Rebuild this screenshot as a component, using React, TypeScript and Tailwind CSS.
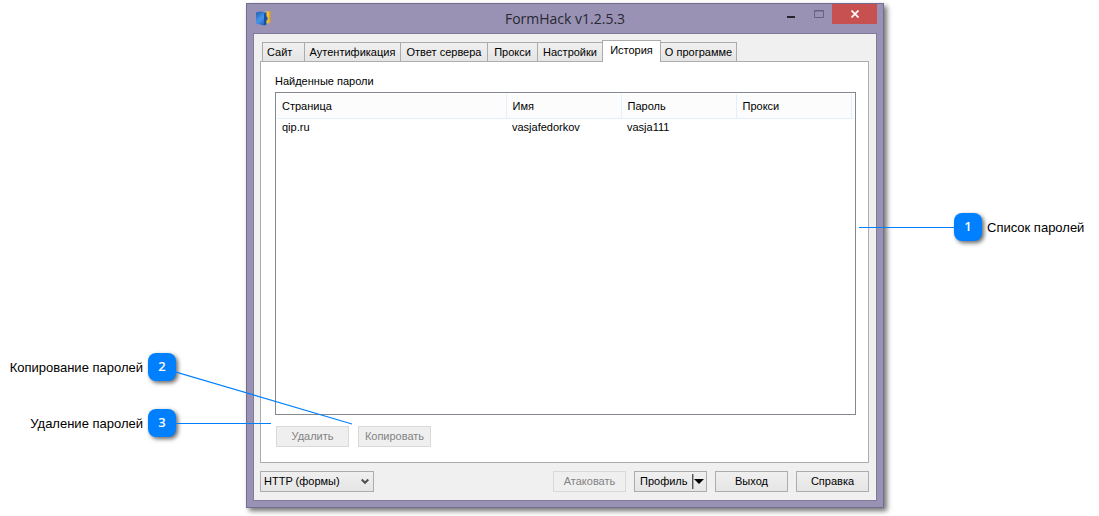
import { useState } from "react";

const tabs = [
  { name: "Сайт", width: "w-[43px] pl-1" },
  { name: "Аутентификация", width: "w-[97px]" },
  { name: "Ответ сервера", width: "w-[88px]" },
  { name: "Прокси", width: "w-[51px]" },
  { name: "Настройки", width: "w-[66px]" },
  { name: "История", width: "w-[59px]" },
  { name: "О программе", width: "w-[77px]" },
];

const rows = [{ page: "qip.ru", name: "vasjafedorkov", password: "vasja111", proxy: "" }];

function Badge({ value }: { value: number }) {
  return (
    <span className="flex size-7 shrink-0 items-center justify-center rounded-lg bg-[#0080ff] font-['Open_Sans',sans-serif] text-[13px] font-semibold text-white shadow-[2px_2px_4px_rgba(0,0,0,0.6)]">
      {value}
    </span>
  );
}

function AppIcon() {
  return (
    <svg width="16" height="16" viewBox="0 0 16 16" aria-hidden="true">
      <defs>
        <linearGradient id="book" x1="0" y1="0" x2="0.6" y2="1">
          <stop offset="0" stopColor="#1b5cb0" />
          <stop offset="0.6" stopColor="#4a94ea" />
          <stop offset="1" stopColor="#2468c4" />
        </linearGradient>
        <linearGradient id="cover" x1="0" y1="0" x2="1" y2="0">
          <stop offset="0" stopColor="#fff2b0" />
          <stop offset="0.5" stopColor="#fbd04a" />
          <stop offset="1" stopColor="#e09c14" />
        </linearGradient>
      </defs>
      <path d="M8 2 15.500 1v11.500L10 14z" fill="url(#cover)" />
      <path d="M1 2.500 5 1.500l6 .5-2 2v11.500L1 13.500z" fill="url(#book)" />
      <path d="M9 3.500 11.500 2v4.500l1 .5v3l-1 .5v4L9 15.500z" fill="#174f9f" />
    </svg>
  );
}

function PushButton({ label, disabled = false }: { label: string; disabled?: boolean }) {
  return (
    <button
      type="button"
      disabled={disabled}
      className="h-[21px] w-[73px] border border-[#acacac] bg-linear-to-b from-[#f0f0f0] to-[#e5e5e5] text-center leading-none disabled:border-[#d9d9d9] disabled:from-[#efefef] disabled:to-[#efefef] disabled:text-[#838383]"
    >
      {label}
    </button>
  );
}

export default function App() {
  const [active, setActive] = useState("История");

  return (
    <main className="relative flex bg-white pt-[3px] pb-2 font-['Liberation_Sans',Arial,sans-serif] text-[11px] text-black">
      <aside className="relative z-10 flex w-[246px] shrink-0 flex-col items-end gap-7 pt-[350px] pr-[70px] text-[13px]">
        <div className="relative flex items-center gap-[5px]">
          <span className="pt-px">Копирование паролей</span>
          <Badge value={2} />
          <svg
            className="pointer-events-none absolute top-[18px] left-full"
            width="177"
            height="55"
            aria-hidden="true"
          >
            <path d="M0 1 176 53" stroke="#0080ff" strokeWidth="1.2" fill="none" />
          </svg>
        </div>
        <div className="relative flex items-center gap-[5px]">
          <span className="pt-px">Удаление паролей</span>
          <Badge value={3} />
          <span className="absolute top-[14px] left-full h-px w-[95px] bg-[#0080ff]" />
        </div>
      </aside>

      <section className="min-w-0 flex-1 border border-[#736d90] bg-[#9992b4] px-[6px] pb-[6px] shadow-[3px_3px_5px_rgba(0,0,0,0.55)]">
        <header className="relative flex h-[29px] items-center justify-center">
          <span className="absolute top-[6px] left-[2px]">
            <AppIcon />
          </span>
          <h1 className="font-['Open_Sans',sans-serif] text-sm text-[#282832]">FormHack v1.2.5.3</h1>
          <div className="absolute top-0 right-0 flex h-5">
            <button type="button" aria-label="Свернуть" className="flex w-7 items-center justify-center">
              <svg width="8" height="12" aria-hidden="true">
                <path d="M0 8h8v2H0z" fill="#252429" />
              </svg>
            </button>
            <button type="button" aria-label="Развернуть" disabled className="flex w-[27px] items-center justify-center">
              <svg width="10" height="8" aria-hidden="true">
                <path d="M.5 .5h9v7h-9zM0 1h10" fill="none" stroke="#68637d" />
              </svg>
            </button>
            <button
              type="button"
              aria-label="Закрыть"
              className="flex w-[45px] items-center justify-center bg-[#c75050]"
            >
              <svg width="8" height="8" viewBox="0 0 8 8" aria-hidden="true">
                <path d="M.5 .5l7 7M7.5 .5l-7 7" stroke="#fff" strokeWidth="1.7" />
              </svg>
            </button>
          </div>
        </header>

        <div className="border border-[#807998] bg-[#f0f0f0] pt-[6px] pr-[7px] pb-2 pl-[6px]">
          <div role="tablist" className="relative flex h-[21px] items-end pl-[2px]">
            {tabs.map((tab) => (
              <button
                key={tab.name}
                type="button"
                role="tab"
                aria-selected={active === tab.name}
                onClick={() => setActive(tab.name)}
                className={`-mr-px shrink-0 border border-[#acacac] leading-none whitespace-nowrap ${tab.width} ${
                  tab.name === "Сайт" ? "text-left" : "text-center"
                } ${
                  active === tab.name
                    ? "z-10 -mb-px h-[22px] border-b-0 bg-white pb-[2px]"
                    : "h-[19px] border-b-0 bg-linear-to-b from-[#f0f0f0] to-[#e5e5e5]"
                }`}
              >
                {tab.name}
              </button>
            ))}
          </div>

          <div role="tabpanel" className="border border-[#acacac] bg-white px-[14px] pt-[11px] pb-[15px]">
            <h2 className="mb-[3px] text-[11px] leading-4">Найденные пароли</h2>
            <div className="mr-[-2px] min-h-[323px] border border-[#828790] bg-white p-px">
              <table className="w-full table-fixed border-collapse text-left">
                <colgroup>
                  <col />
                  <col className="w-[115px]" />
                  <col className="w-[115px]" />
                  <col className="w-[115px]" />
                  <col className="w-[3px]" />
                </colgroup>
                <thead>
                  <tr className="h-6 border-b border-[#e3effb] bg-[#fcfcfc]">
                    <th className="border-r border-[#e3effb] pl-[5px] font-normal">Страница</th>
                    <th className="border-r border-[#e3effb] pl-[6px] font-normal">Имя</th>
                    <th className="border-r border-[#e3effb] pl-[6px] font-normal">Пароль</th>
                    <th className="border-r border-[#e3effb] pl-[6px] font-normal">Прокси</th>
                    <td />
                  </tr>
                </thead>
                <tbody>
                  {rows.map((row) => (
                    <tr key={row.name} className="h-[18px]">
                      <td className="pl-[5px]">{row.page}</td>
                      <td className="pl-[6px]">{row.name}</td>
                      <td className="pl-[6px]">{row.password}</td>
                      <td className="pl-[6px]">{row.proxy}</td>
                      <td />
                    </tr>
                  ))}
                </tbody>
              </table>
            </div>
            <div className="mt-[11px] flex gap-[9px] pl-px">
              <PushButton label="Удалить" disabled />
              <PushButton label="Копировать" disabled />
            </div>
          </div>

          <footer className="mt-2 flex items-center gap-2">
            <div className="relative mr-auto">
              <select
                aria-label="Протокол"
                className="block h-[21px] w-[114px] appearance-none border border-[#acacac] bg-linear-to-b from-[#f0f0f0] to-[#e5e5e5] pl-[3px] leading-none"
              >
                <option>HTTP (формы)</option>
              </select>
              <svg
                className="pointer-events-none absolute top-[7px] right-[5px]"
                width="8"
                height="7"
                aria-hidden="true"
              >
                <path d="M.7 1.5 4 4.8 7.3 1.5" fill="none" stroke="#505050" strokeWidth="2" />
              </svg>
            </div>
            <PushButton label="Атаковать" disabled />
            <button
              type="button"
              className="flex h-[21px] w-[73px] items-center border border-[#acacac] bg-linear-to-b from-[#f0f0f0] to-[#e5e5e5] pl-[5px] leading-none"
            >
              Профиль
              <svg className="mr-[2px] ml-auto" width="12" height="15" aria-hidden="true">
                <path d="M0 0h1v15H0z" fill="#555" />
                <path d="M1 0h1v15H1z" fill="#aaa" />
                <path d="M2 5h10L7 10z" fill="#000" />
              </svg>
            </button>
            <PushButton label="Выход" />
            <PushButton label="Справка" />
          </footer>
        </div>
      </section>

      <aside className="relative z-10 w-[215px] shrink-0 pt-[210px] pl-[70px] text-[13px]">
        <div className="relative flex items-center gap-[5px]">
          <span className="absolute top-[14px] right-full h-px w-[95px] bg-[#0080ff]" />
          <Badge value={1} />
          <span className="pt-px">Список паролей</span>
        </div>
      </aside>
    </main>
  );
}
